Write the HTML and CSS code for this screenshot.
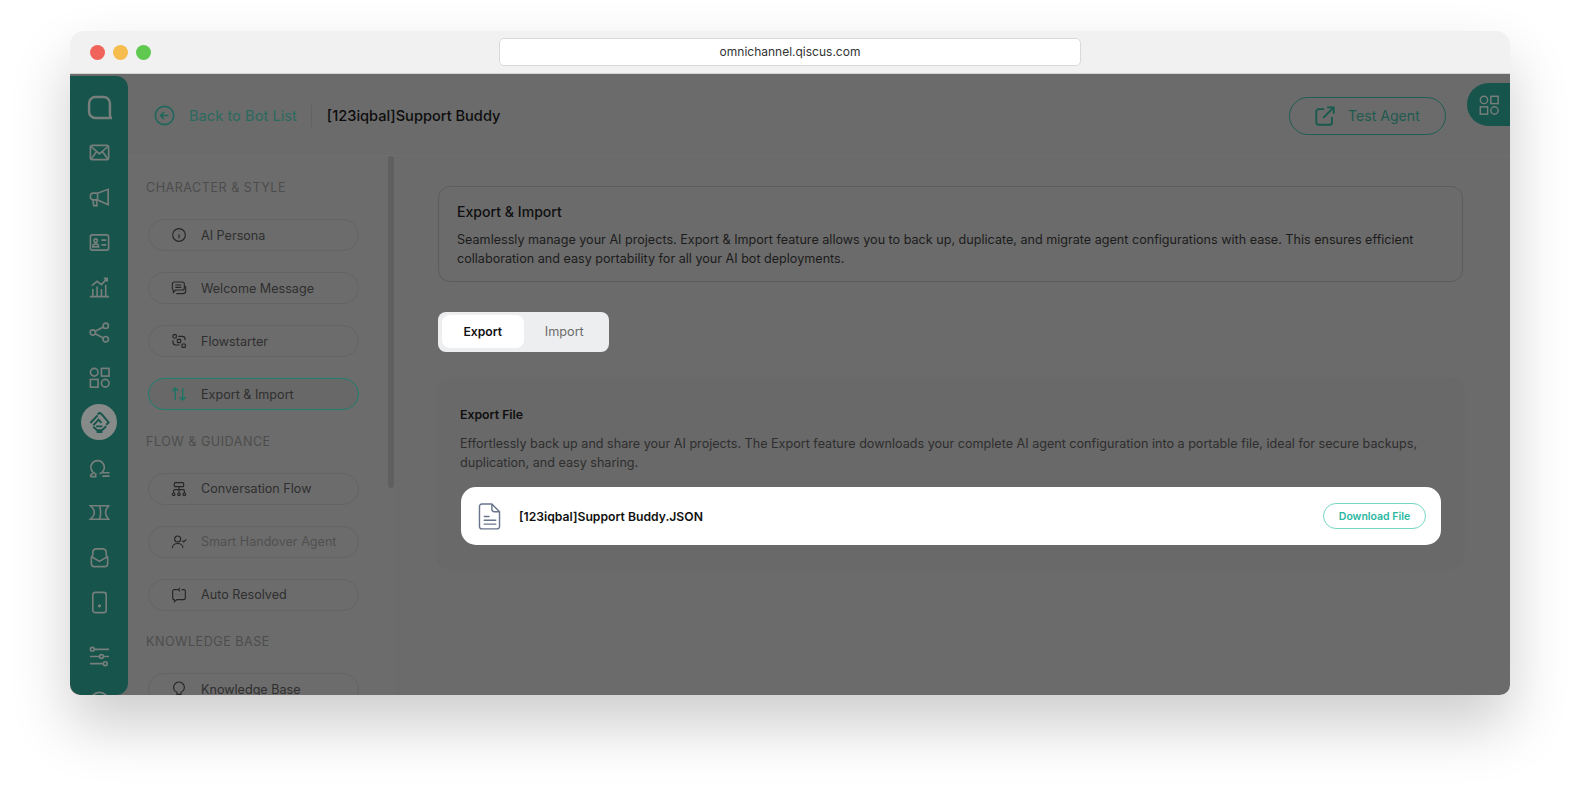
FILE: index.html
```html
<!DOCTYPE html>
<html lang="en">
<head>
    <meta charset="UTF-8">
    <meta name="viewport" content="width=device-width, initial-scale=1.0">
    <title>Export & Import - Qiscus Omnichannel</title>
    <link rel="stylesheet" href="styles.css">
</head>
<body>
    <div class="window">
        <div class="titlebar">
            <div class="lights">
                <span class="light red"></span>
                <span class="light yellow"></span>
                <span class="light green"></span>
            </div>
            <div class="url-bar">omnichannel.qiscus.com</div>
        </div>

        <div class="app">
            <!-- Left icon rail -->
            <nav class="rail">
                <div class="rail-item"><svg class="logo" viewBox="0 0 24 24"><path d="M8 2h8a6 6 0 0 1 6 6v11c0 1 .3 2 1 3H8a6 6 0 0 1-6-6V8a6 6 0 0 1 6-6z"/></svg></div>
                <div class="rail-item"><svg viewBox="0 0 24 24"><rect x="2.500" y="4.500" width="19" height="15" rx="2"/><path d="M3.500 6l8.500 7.500L20.500 6M3.500 18.500l5.500-7.500M20.500 18.500L15 11"/></svg></div>
                <div class="rail-item"><svg viewBox="0 0 24 24"><path d="M21 3.500v16l-11-5H5.500a3 3 0 0 1-3-3V10a3 3 0 0 1 3-2.500H10zM10 7.500v7M5 14.500l1 6h3.500l-.8-6"/></svg></div>
                <div class="rail-item"><svg viewBox="0 0 24 24"><rect x="2.500" y="4" width="19" height="16" rx="2"/><circle cx="8" cy="10" r="1.800"/><path d="M5 16.500c0-4 6-4 6 0zM14 9.500h5M14 14.500h5"/></svg></div>
                <div class="rail-item"><svg viewBox="0 0 24 24"><path d="M2 21.500h20M5 20.500v-7M9.500 20.500V11M14 20.500v-7M18.500 20.500V9M4 10l5.500-4.500L14 9l6-6.500M16.500 2.500H20V6"/></svg></div>
                <div class="rail-item"><svg viewBox="0 0 24 24"><circle cx="5" cy="12" r="2.800"/><circle cx="18.500" cy="5" r="2.800"/><circle cx="18.500" cy="19" r="2.800"/><path d="M7.500 10.700l8.500-4.500M7.500 13.300l8.500 4.500"/></svg></div>
                <div class="rail-item"><svg viewBox="0 0 24 24"><circle cx="6.500" cy="6.500" r="4"/><rect x="14" y="2.500" width="8" height="8"/><rect x="2.500" y="14" width="8" height="8"/><circle cx="18" cy="18" r="4"/></svg></div>
                <div class="rail-item">
                    <span class="rail-active"><svg viewBox="0 0 24 24"><path d="M2.500 12.500L10 4.500M5.500 15L11 9l3 3.500M14 3l7.500 9-2.500 2.500M10 3.500l2-1.500 2 1M5.500 16.500l4 3.500h5l4.500-4M8.500 16h6.500M9 22h6"/></svg></span>
                </div>
                <div class="rail-item"><svg viewBox="0 0 24 24"><path d="M2.500 21.500H8v-3a7 7 0 1 1 4 0M2.500 21.500c0-1.500 1-2.800 3-3.200M15 17.500h7.500M15 21h7.500"/></svg></div>
                <div class="rail-item"><svg viewBox="0 0 24 24"><path d="M2.500 5h19l-1 1.500a8 8 0 0 0 0 11l1 1.500h-19l2-2a7 7 0 0 0 0-10zM12 5c1.500 4.500 1.500 9.500 0 14"/></svg></div>
                <div class="rail-item"><svg viewBox="0 0 24 24"><path d="M3.500 11v7.500a3 3 0 0 0 3 3h11a3 3 0 0 0 3-3V11M3.500 11L12 16l8.500-5M5 10V6.500A3.500 3.500 0 0 1 8.500 3h7A3.500 3.500 0 0 1 19 6.500V10M5 10l-1.500 1M19 10l1.500 1"/></svg></div>
                <div class="rail-item"><svg viewBox="0 0 24 24"><rect x="5" y="1.500" width="14" height="21" rx="2.500"/><circle cx="12" cy="15.500" r=".8"/></svg></div>
                <div class="rail-item rail-bottom"><svg viewBox="0 0 24 24"><path d="M6.500 4.500H22M2 12h10M16 12h6M2 19.500h13.500"/><circle cx="4.500" cy="4.500" r="2"/><circle cx="14" cy="12" r="2"/><circle cx="18" cy="19.500" r="2"/></svg></div>
                <div class="rail-item"><svg viewBox="0 0 24 24"><circle cx="12" cy="12" r="9.500"/></svg></div>
            </nav>

            <div class="page">
                <header class="topbar">
                    <a class="back-link">
                        <svg viewBox="0 0 24 24"><circle cx="12" cy="12" r="10.500"/><path d="M16.500 12h-9M11.500 8l-4 4 4 4"/></svg>
                        <span>Back to Bot List</span>
                    </a>
                    <span class="topbar-sep"></span>
                    <span class="bot-name">[123iqbal]Support Buddy</span>
                    <button class="test-agent">
                        <svg viewBox="0 0 24 24"><path d="M11 4.500H5a2.500 2.500 0 0 0-2.500 2.500v12A2.500 2.500 0 0 0 5 21.500h12a2.500 2.500 0 0 0 2.500-2.500v-6M10 14L21.500 2.500M14.500 2.500h7v7"/></svg>
                        Test Agent
                    </button>
                    <div class="apps-tab">
                        <svg viewBox="0 0 24 24"><circle cx="6.500" cy="6.500" r="4"/><rect x="14" y="2.500" width="8" height="8"/><rect x="2.500" y="14" width="8" height="8"/><circle cx="18" cy="18" r="4"/></svg>
                    </div>
                </header>

                <div class="content">
                    <aside class="side">
                        <div class="scrollbar"></div>

                        <h4 class="side-label first">Character &amp; Style</h4>
                        <div class="side-group">
                            <a class="side-item"><svg viewBox="0 0 24 24"><circle cx="12" cy="12" r="9.500"/><path d="M12 11v6M12 7v.5"/></svg>AI Persona</a>
                            <a class="side-item"><svg viewBox="0 0 24 24"><path d="M5 3h12a3 3 0 0 1 3 3v6a3 3 0 0 1-3 3H7l-3.500 3.500V15A2.500 2.500 0 0 1 2 12.500V6a3 3 0 0 1 3-3zM6.500 7.500h9M6.500 11h9M8 20.500h10a4 4 0 0 0 4-4V9"/></svg>Welcome Message</a>
                            <a class="side-item"><svg viewBox="0 0 24 24"><rect x="3" y="2.500" width="5" height="5" rx="1"/><rect x="9.500" y="9.500" width="5" height="5" rx="1"/><rect x="16.500" y="16.500" width="5" height="5" rx="1"/><path d="M11 5h6a4 4 0 0 1 4 4v2M3 11v3a4 4 0 0 0 4 4h6"/></svg>Flowstarter</a>
                            <a class="side-item active"><svg viewBox="0 0 24 24"><path d="M6.500 21V3M2 7.500l4.500-4.500L11 7.500M17.500 3v18M13 16.500l4.500 4.500 4.500-4.500"/></svg>Export &amp; Import</a>
                        </div>

                        <h4 class="side-label">Flow &amp; Guidance</h4>
                        <div class="side-group">
                            <a class="side-item"><svg viewBox="0 0 24 24"><rect x="5" y="2.500" width="14" height="6" rx="1.500"/><path d="M12 8.500V18M4 18v-3.500a1.500 1.500 0 0 1 1.500-1.500h13a1.500 1.500 0 0 1 1.500 1.500V18"/><circle cx="4" cy="20" r="2"/><circle cx="12" cy="20" r="2"/><circle cx="20" cy="20" r="2"/></svg>Conversation Flow</a>
                            <a class="side-item muted"><svg viewBox="0 0 24 24"><circle cx="10" cy="7.500" r="4.500"/><path d="M2 21c0-9 16-9 16 0M17 10l2 2 4-4"/></svg>Smart Handover Agent</a>
                            <a class="side-item"><svg viewBox="0 0 24 24"><path d="M10 4H5a2.500 2.500 0 0 0-2.500 2.500v10A2.500 2.500 0 0 0 5 19v3l4-3h10a2.500 2.500 0 0 0 2.500-2.500v-10A2.500 2.500 0 0 0 19 4h-3M13.500 1.500L11 4l2.500 2.500M7.500 11.500v.5M12 11.500v.5M16.500 11.500v.5"/></svg>Auto Resolved</a>
                        </div>

                        <h4 class="side-label">Knowledge Base</h4>
                        <div class="side-group">
                            <a class="side-item"><svg viewBox="0 0 24 24"><path d="M9 17a8 8 0 1 1 6 0v3H9zM9.500 22.500h5"/></svg>Knowledge Base</a>
                        </div>
                    </aside>

                    <main class="main">
                        <section class="intro">
                            <h3>Export &amp; Import</h3>
                            <p>Seamlessly manage your AI projects. Export &amp; Import feature allows you to back up, duplicate, and migrate agent configurations with ease. This ensures efficient collaboration and easy portability for all your AI bot deployments.</p>
                        </section>

                        <div class="tabs">
                            <button class="tab selected">Export</button>
                            <button class="tab">Import</button>
                        </div>

                        <section class="export-card">
                            <h4>Export File</h4>
                            <p>Effortlessly back up and share your AI projects. The Export feature downloads your complete AI agent configuration into a portable file, ideal for secure backups, duplication, and easy sharing.</p>
                            <div class="file-row">
                                <svg class="file-icon" viewBox="0 0 22 28"><path d="M2.500 1h10.500l8 8v15.500a2.500 2.500 0 0 1-2.500 2.500h-16A2.500 2.500 0 0 1 0 24.500v-21A2.500 2.500 0 0 1 2.500 1zM13 1v5.500A2.500 2.500 0 0 0 15.500 9H21M5 14h5M5 18h12M5 22h12" transform="translate(.5)"/></svg>
                                <span class="file-name">[123iqbal]Support Buddy.JSON</span>
                                <button class="download">Download File</button>
                            </div>
                        </section>
                    </main>
                </div>
            </div>
        </div>
    </div>
</body>
</html>
```

FILE: styles.css
```css
html {
    height: 100%;
}

body {
    height: 100%;
    margin: 0;
    padding: 31px 0 0 70px;
    box-sizing: border-box;
    background-color: #ffffff;
    font-family: Inter, 'Liberation Sans', sans-serif;
}

h3, h4, p {
    margin: 0;
}

button {
    font-family: inherit;
    cursor: pointer;
}

.window {
    display: flex;
    flex-direction: column;
    width: 1440px;
    height: 664px;
    border-radius: 14px 14px 10px 10px;
    overflow: hidden;
    box-shadow: 0 30px 60px rgba(0, 0, 0, 0.2);
}

.titlebar {
    position: relative;
    display: flex;
    justify-content: center;
    align-items: center;
    flex: none;
    height: 42px;
    background-color: #f1f1f1;
    border-bottom: 1px solid #d6d6d6;
}

.lights {
    position: absolute;
    left: 20px;
    top: 14px;
    display: flex;
    gap: 8px;
}

.light {
    width: 15px;
    height: 15px;
    border-radius: 50%;
}

.red { background-color: #f1645c; }
.yellow { background-color: #f6bc4d; }
.green { background-color: #5ec84f; }

.url-bar {
    display: flex;
    justify-content: center;
    align-items: center;
    width: 582px;
    height: 28px;
    margin-bottom: 1px;
    background-color: #ffffff;
    border: 1px solid #d9d9d9;
    border-radius: 5px;
    box-sizing: border-box;
    font-size: 12px;
    color: #333333;
}

.app {
    display: flex;
    flex: 1;
    min-height: 0;
    background-color: #6b6b6b;
}

.rail {
    flex: none;
    width: 58px;
    margin-top: 2px;
    padding-top: 8.500px;
    box-sizing: border-box;
    background-color: #17544b;
    border-radius: 0 12px 12px 12px;
    overflow: hidden;
    color: #767f7c;
}

.rail-item {
    display: flex;
    justify-content: center;
    align-items: center;
    height: 45px;
}

.rail-item svg {
    width: 23px;
    height: 23px;
    fill: none;
    stroke: currentColor;
    stroke-width: 1.700;
}

.rail-item svg.logo {
    width: 25px;
    height: 25px;
    stroke-width: 2.400;
}

.rail-bottom {
    margin-top: 9px;
}

.rail-active {
    display: flex;
    justify-content: center;
    align-items: center;
    width: 36px;
    height: 36px;
    border-radius: 50%;
    background-color: #868a88;
    color: #17544b;
}

.rail-active svg {
    stroke-width: 2;
}

.page {
    display: flex;
    flex-direction: column;
    flex: 1;
    min-width: 0;
}

.topbar {
    position: relative;
    display: flex;
    align-items: center;
    flex: none;
    height: 82px;
    padding-left: 26px;
    padding-top: 2px;
    box-sizing: border-box;
    border-bottom: 1px solid #6e6e6e;
}

.back-link {
    display: flex;
    align-items: center;
    gap: 14px;
    font-size: 14.700px;
    color: #2a6a5e;
}

.back-link svg {
    width: 21px;
    height: 21px;
    fill: none;
    stroke: #1f675a;
    stroke-width: 1.900;
}

.topbar-sep {
    width: 1px;
    height: 22px;
    margin: 0 15px 0 14px;
    background-color: #626262;
}

.bot-name {
    font-size: 14.600px;
    font-weight: 500;
    color: #0d0d0d;
}

.test-agent {
    display: flex;
    align-items: center;
    gap: 12px;
    width: 157px;
    height: 38px;
    margin-left: auto;
    margin-right: 64px;
    padding: 0 0 0 24px;
    background: none;
    border: 1px solid #1f5f54;
    border-radius: 19px;
    font-size: 14.100px;
    color: #1f5a4f;
}

.test-agent svg {
    width: 22px;
    height: 22px;
    fill: none;
    stroke: #17594d;
    stroke-width: 2;
}

.apps-tab {
    position: absolute;
    right: 0;
    top: 9px;
    display: flex;
    align-items: center;
    width: 43px;
    height: 43px;
    padding-left: 11px;
    box-sizing: border-box;
    background-color: #17544b;
    border-radius: 22px 0 0 22px;
}

.apps-tab svg {
    width: 22px;
    height: 22px;
    fill: none;
    stroke: #767f7c;
    stroke-width: 1.600;
}

.content {
    display: flex;
    flex: 1;
    min-height: 0;
}

.side {
    position: relative;
    flex: none;
    width: 267px;
    padding: 23px 0 0 18px;
    box-sizing: border-box;
    background-color: #6c6c6c;
    overflow: hidden;
}

.scrollbar {
    position: absolute;
    left: 260px;
    top: 0;
    width: 6px;
    height: 332px;
    border-radius: 3px;
    background-color: #5f5f5f;
}

.side-label {
    height: 18px;
    margin: 22.500px 0 22px;
    font-size: 12.600px;
    font-weight: 400;
    line-height: 18px;
    letter-spacing: 0.5px;
    text-transform: uppercase;
    color: #4c4c4c;
}

.side-label.first {
    margin-top: 0;
    margin-bottom: 22px;
}

.side-group {
    display: flex;
    flex-direction: column;
    gap: 21px;
    padding-left: 2px;
}

.side-item {
    display: flex;
    align-items: center;
    gap: 14px;
    flex: none;
    width: 211px;
    height: 32px;
    padding-left: 22px;
    box-sizing: border-box;
    border: 1px solid #646464;
    border-radius: 16px;
    font-size: 12.600px;
    color: #2f2f2f;
}

.side-item svg {
    flex: none;
    width: 16px;
    height: 16px;
    fill: none;
    stroke: #262626;
    stroke-width: 1.700;
}

.side-item.active {
    border-color: #1f7e6e;
    background-color: #686868;
}

.side-item.active svg {
    stroke: #1a7565;
    stroke-width: 2;
}

.side-item.muted {
    color: #505050;
}

.main {
    flex: 1;
    min-width: 0;
    padding: 30px 47px 0 43px;
    border-left: 1px solid #686868;
    margin-left: -1px;
}

.intro {
    height: 96px;
    padding: 15px 18px 0;
    box-sizing: border-box;
    border: 1px solid #5c5c5c;
    border-radius: 12px;
}

.intro h3 {
    margin-bottom: 8px;
    font-size: 14.100px;
    font-weight: 500;
    line-height: 20px;
    color: #0f0f0f;
}

.intro p {
    font-size: 12.600px;
    line-height: 19px;
    color: #1c1c1c;
}

.tabs {
    display: flex;
    width: 171px;
    height: 40px;
    margin-top: 30px;
    padding: 3px 4px;
    box-sizing: border-box;
    background-color: #eceef0;
    border-radius: 8px;
}

.tab {
    width: 82px;
    height: 33px;
    padding: 0;
    background: none;
    border: none;
    border-radius: 8px;
    font-size: 12.700px;
    color: #6b6b6b;
}

.tab.selected {
    background-color: #ffffff;
    font-size: 12.200px;
    font-weight: 600;
    color: #111111;
}

.export-card {
    height: 188px;
    margin-top: 27px;
    padding: 26.500px 22px 0 23px;
    box-sizing: border-box;
    background-color: #696969;
    border-radius: 10px;
    box-shadow: 0 1px 4px rgba(0, 0, 0, 0.03);
}

.export-card h4 {
    margin-left: -1px;
    font-size: 12.300px;
    font-weight: 600;
    line-height: 18px;
    color: #0f0f0f;
}

.export-card p {
    margin: 10px 0 15px -1px;
    font-size: 12.600px;
    line-height: 19px;
    color: #2e2e2e;
}

.file-row {
    display: flex;
    align-items: center;
    height: 58px;
    padding: 1px 15px 0 18px;
    box-sizing: border-box;
    background-color: #ffffff;
    border-radius: 15px;
}

.file-icon {
    flex: none;
    width: 21px;
    height: 27px;
    fill: none;
    stroke: #68758a;
    stroke-width: 1.500;
    stroke-linecap: round;
    stroke-linejoin: round;
    overflow: visible;
}

.file-name {
    margin-left: 19px;
    font-size: 12.200px;
    font-weight: 600;
    color: #111111;
}

.download {
    width: 103px;
    height: 26px;
    margin-left: auto;
    padding: 0;
    background: none;
    border: 1px solid #78d6c4;
    border-radius: 13px;
    font-size: 10.500px;
    font-weight: 600;
    color: #29b79f;
}
```
